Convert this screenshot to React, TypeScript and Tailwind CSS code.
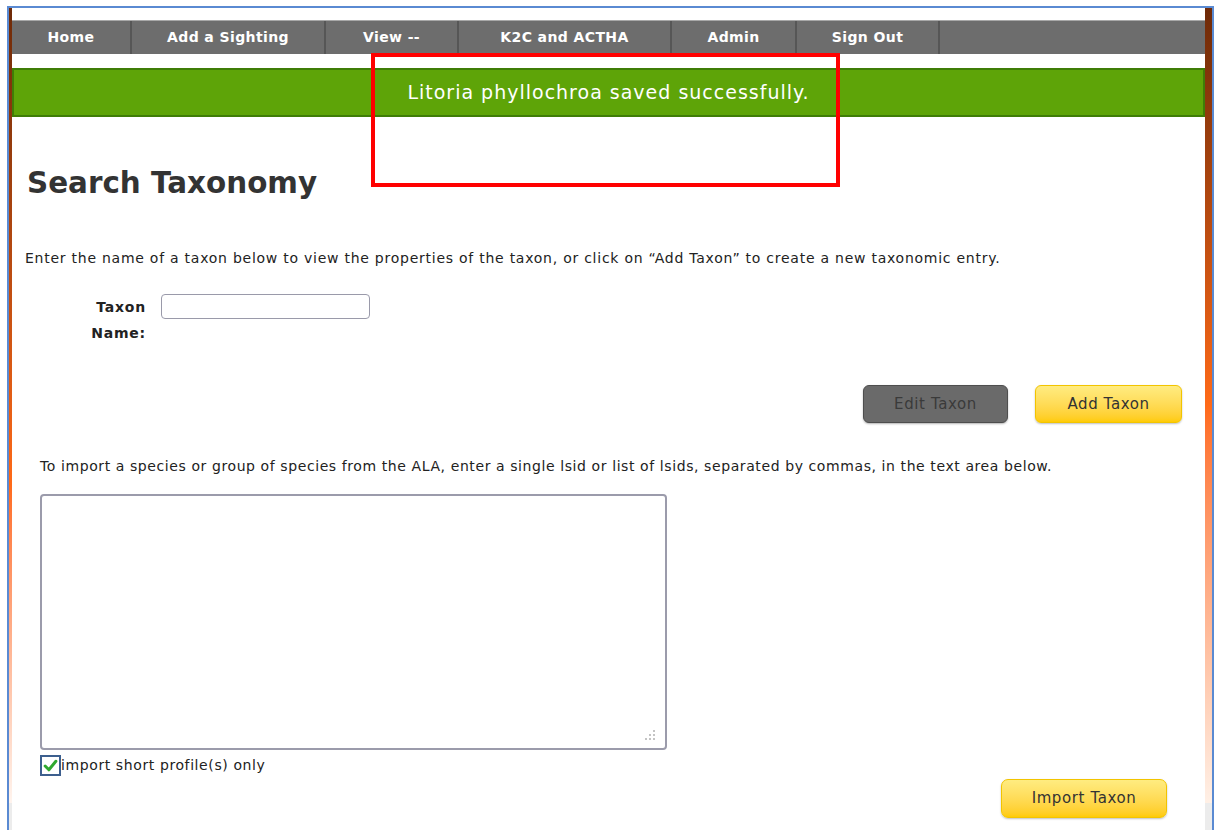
import React from "react";

const navItems = [
  { label: "Home", w: "w-[120px]" },
  { label: "Add a Sighting", w: "w-[194px]" },
  { label: "View --", w: "w-[133px]" },
  { label: "K2C and ACTHA", w: "w-[213px]" },
  { label: "Admin", w: "w-[125px]" },
  { label: "Sign Out", w: "w-[143px]" },
];

const Navbar = () => {
  return (
    <nav className="flex h-[34px] bg-[#6d6d6d] border-t border-[#a8a8a8]">
      {navItems.map((item) => (
        <div
          key={item.label}
          className={`${item.w} flex items-center justify-center border-r-2 border-[#565656] text-white font-bold text-[14px] tracking-[0.4px]`}
        >
          {item.label}
        </div>
      ))}
    </nav>
  );
};

const CheckMark = () => (
  <svg width="15" height="15" viewBox="0 0 14 14">
    <path d="M2 7.5 L5.5 11 L12 3" fill="none" stroke="#2fa82f" strokeWidth="2.8" strokeLinecap="round" strokeLinejoin="round" />
  </svg>
);

const GripDots = () => (
  <svg width="12" height="12" viewBox="0 0 12 12" className="absolute right-[10px] bottom-[8px]">
    <g fill="#c4c4c4">
      <rect x="8" y="0" width="2" height="2" />
      <rect x="4" y="4" width="2" height="2" />
      <rect x="8" y="4" width="2" height="2" />
      <rect x="0" y="8" width="2" height="2" />
      <rect x="4" y="8" width="2" height="2" />
      <rect x="8" y="8" width="2" height="2" />
    </g>
  </svg>
);

export default function App() {
  return (
    <div
      className="relative h-[830px] w-[1215px] overflow-hidden bg-white pl-[7px] pt-[6px] text-[#333]"
      style={{ fontFamily: '"DejaVu Sans", Verdana, sans-serif' }}
    >
      <div className="flex h-full w-[1207px] border-l-2 border-t-2 border-r-2 border-[#5a8ad2]">
        <div className="flex w-[3px] flex-col">
          <div className="flex-1 bg-linear-to-b from-[#6e2a08] via-[#ff6a18] via-60% to-[#fff4ee]" />
          <div className="h-[27px] bg-[#ececec]" />
        </div>

        <main className="flex-1 pt-[12px]">
          <Navbar />

          <div className="mt-[14px] flex h-[49px] items-center justify-center border-2 border-[#3f7d07] bg-[#5ea408] text-[19px] tracking-[1px] text-white">
            Litoria phyllochroa saved successfully.
          </div>

          <h1 className="ml-[15px] mt-[48px] text-[29.4px] font-bold leading-[36px] text-[#333]">
            Search Taxonomy
          </h1>

          <p className="ml-[13px] mt-[48px] text-[14px] leading-[18px] tracking-[0.75px] text-[#222]">
            Enter the name of a taxon below to view the properties of the taxon, or click on “Add Taxon” to create a new taxonomic entry.
          </p>

          <div className="ml-[78px] mt-[26px] flex gap-[15px]">
            <label className="mt-[1px] w-[56px] text-right text-[14px] font-bold leading-[26px] tracking-[0.8px] text-[#222]">
              Taxon Name:
            </label>
            <input
              type="text"
              className="mt-[1px] h-[25px] w-[209px] rounded-[4px] border border-[#9a9aaa] bg-white px-2 outline-none"
            />
          </div>

          <div className="mt-[39px] flex justify-end gap-[27px] pr-[23px]">
            <button className="h-[38px] w-[145px] rounded-[6px] border border-[#4e4e4e] bg-[#6a6a6a] text-[15px] tracking-[0.6px] text-[#3a3a3a] shadow-[0_1px_2px_rgba(0,0,0,0.3)]">
              Edit Taxon
            </button>
            <button className="h-[38px] w-[147px] rounded-[6px] border border-[#f2c400] bg-linear-to-b from-[#ffec80] to-[#ffcb00] text-[15px] tracking-[0.6px] text-[#333] shadow-[0_1px_2px_rgba(0,0,0,0.25)]">
              Add Taxon
            </button>
          </div>

          <p className="ml-[28px] mt-[34px] text-[14px] leading-[18px] tracking-[0.59px] text-[#222]">
            To import a species or group of species from the ALA, enter a single lsid or list of lsids, separated by commas, in the text area below.
          </p>

          <div className="relative ml-[28px] mt-[19px] h-[256px] w-[627px]">
            <textarea className="h-full w-full resize-none rounded-[4px] border-2 border-[#9b9bab] bg-white outline-none" />
            <GripDots />
          </div>

          <label className="ml-[28px] mt-[5px] flex items-center text-[14px] tracking-[0.6px] text-[#222]">
            <span className="flex h-[21px] w-[21px] items-center justify-center border-2 border-[#3d5f8e] bg-white">
              <CheckMark />
            </span>
            import short profile(s) only
          </label>

          <div className="mt-[3px] flex justify-end pr-[38px]">
            <button className="h-[39px] w-[166px] rounded-[7px] border border-[#f2c400] bg-linear-to-b from-[#ffec80] to-[#ffcb00] text-[15px] tracking-[0.6px] text-[#333] shadow-[0_1px_2px_rgba(0,0,0,0.25)]">
              Import Taxon
            </button>
          </div>
        </main>

        <div className="flex w-[7px] flex-col">
          <div className="flex-1 bg-linear-to-b from-[#6e2a08] via-[#ff6a18] via-50% to-[#fff0e6]" />
          <div className="h-[27px] bg-[#ececec]" />
        </div>
      </div>

      {/* highlight box around the status message */}
      <div className="absolute left-[371px] top-[53px] h-[134px] w-[469px] border-[4px] border-[#ff0000]" />
    </div>
  );
}
